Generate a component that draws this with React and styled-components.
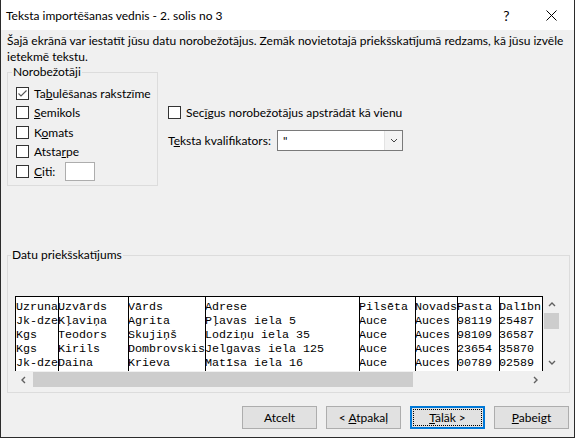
import React from "react";
import styled, { createGlobalStyle, css } from "styled-components";

const GlobalStyle = createGlobalStyle`
  html, body {
    margin: 0;
    padding: 0;
    background: #fff;
  }
  body {
    font-family: Lato, "Noto Sans", sans-serif;
    font-size: 12px;
    color: #000;
  }
`;

const Window = styled.div`
  box-sizing: border-box;
  width: 575px;
  height: 438px;
  display: flex;
  flex-direction: column;
  border: 1px solid #2b2b2b;
  border-top: none;
  background: #f0f0f0;
`;

const TitleBar = styled.div`
  height: 30px;
  flex-shrink: 0;
  display: flex;
  align-items: center;
  background: #fff;
`;

const Title = styled.div`
  flex: 1;
  padding-left: 5px;
`;

const TitleButton = styled.div`
  width: 45px;
  height: 30px;
  display: flex;
  align-items: center;
  justify-content: center;
  font-size: 14px;
`;

const Body = styled.div`
  flex: 1;
  display: flex;
  flex-direction: column;
  padding: 3px 4px 0 6px;
`;

const Description = styled.div`
  line-height: 16px;
  white-space: nowrap;
`;

const OptionsRow = styled.div`
  display: flex;
  margin-top: -1px;
`;

const Group = styled.fieldset`
  margin: 0;
  min-width: 0;
  border: 1px solid #dcdcdc;
  padding: ${p => p.$pad};
  ${p => p.$width && `width: ${p.$width}px; box-sizing: border-box;`}
`;

const Legend = styled.legend`
  padding: 0 1px;
  margin-left: -4px;
  line-height: 16px;
`;

const CheckRow = styled.div`
  display: flex;
  align-items: center;
  height: ${p => p.$h || 20}px;
  white-space: nowrap;
`;

const Box = styled.div`
  box-sizing: border-box;
  width: 13px;
  height: 13px;
  flex-shrink: 0;
  border: 1px solid #333;
  background: #fff;
  margin-right: 5px;
  display: flex;
  align-items: center;
  justify-content: center;
`;

const SmallInput = styled.div`
  box-sizing: border-box;
  width: 30px;
  height: 19px;
  margin-left: 10px;
  border: 1px solid #adadad;
  background: #fff;
`;

const RightColumn = styled.div`
  margin-left: 10px;
  padding-top: 38px;
`;

const ComboRow = styled.div`
  display: flex;
  align-items: center;
  margin-top: 8px;
`;

const ComboLabel = styled.div`
  width: 109px;
`;

const Combo = styled.div`
  box-sizing: border-box;
  width: 126px;
  height: 21px;
  display: flex;
  border: 1px solid #7a7a7a;
  background: #fff;
`;

const ComboValue = styled.div`
  flex: 1;
  padding-left: 5px;
  line-height: 19px;
`;

const ComboButton = styled.div`
  width: 17px;
  display: flex;
  align-items: center;
  justify-content: center;
  background: #f3f3f3;
  border-left: 1px solid #e3e3e3;
`;

const PreviewGroup = styled(Group)`
  margin-top: 61px;
`;

const Preview = styled.div`
  display: grid;
  grid-template-columns: 1fr 17px;
  grid-template-rows: 75px 17px;
`;

const Table = styled.div`
  display: flex;
  overflow: hidden;
  background: #fff;
  border: 1px solid #000;
  border-bottom: none;
  font-family: "Liberation Mono", "DejaVu Sans Mono", monospace;
  font-size: 11.666px;
  line-height: 14px;
`;

const Col = styled.div`
  flex-shrink: 0;
  width: ${p => p.$chars * 7}px;
  padding-top: 3px;
  white-space: pre;
  overflow: hidden;
  ${p => !p.$first && `box-shadow: inset 1px 0 0 #000;`}
`;

const VScroll = styled.div`
  display: flex;
  flex-direction: column;
  align-items: center;
  background: #f0f0f0;
`;

const HScroll = styled.div`
  display: flex;
  align-items: center;
  background: #f0f0f0;
`;

const Arrow = styled.div`
  width: 17px;
  height: 17px;
  flex-shrink: 0;
  display: flex;
  align-items: center;
  justify-content: center;
`;

const Thumb = styled.div`
  background: #cdcdcd;
  ${p =>
    p.$vertical
      ? css`
          width: 15px;
          height: 16px;
        `
      : css`
          height: 15px;
          width: 380px;
          margin-left: 1px;
        `}
`;

const Spacer = styled.div`
  flex: 1;
`;

const Corner = styled.div`
  background: #f0f0f0;
`;

const Footer = styled.div`
  display: flex;
  justify-content: flex-end;
  gap: 9px;
  margin-top: 13px;
  padding-right: 1px;
`;

const Button = styled.div`
  position: relative;
  box-sizing: border-box;
  width: 75px;
  height: 23px;
  display: flex;
  align-items: center;
  justify-content: center;
  white-space: pre;
  background: #e1e1e1;
  border: 1px solid #adadad;
  ${p =>
    p.$focused &&
    css`
      border: 2px solid #0078d7;
      &::after {
        content: "";
        position: absolute;
        inset: 1px;
        border: 1px dotted #000;
      }
    `}
`;

const Check = () => (
  <svg width="11" height="11" viewBox="0 0 11 11">
    <polyline points="1.5,5.5 4,8 9.5,2.5" fill="none" stroke="#555" strokeWidth="1.1" />
  </svg>
);

const Chevron = ({ dir, size = 7, color = "#606060", width = 1.4 }) => {
  const pts = {
    up: "1,5 4,2 7,5",
    down: "1,2 4,5 7,2",
    left: "5,1 2,4 5,7",
    right: "3,1 6,4 3,7"
  }[dir];
  return (
    <svg width={size + 1} height={size + 1} viewBox="0 0 8 8">
      <polyline points={pts} fill="none" stroke={color} strokeWidth={width} />
    </svg>
  );
};

const columns = [
  { chars: 6, rows: ["Uzruna", "Jk-dze", "Kgs", "Kgs", "Jk-dze"] },
  { chars: 10, rows: ["Uzvārds", "Kļaviņa", "Teodors", "Kirils", "Daina"] },
  { chars: 11, rows: ["Vārds", "Agrita", "Skujiņš", "Dombrovskis", "Krieva"] },
  { chars: 22, rows: ["Adrese", "Pļavas iela 5", "Lodziņu iela 35", "Jelgavas iela 125", "Matīsa iela 16"] },
  { chars: 8, rows: ["Pilsēta", "Auce", "Auce", "Auce", "Auce"] },
  { chars: 6, rows: ["Novads", "Auces", "Auces", "Auces", "Auces"] },
  { chars: 6, rows: ["Pasta", "98119", "98109", "23654", "00789"] },
  { chars: 6, rows: ["Dalībn", "25487", "36587", "35870", "02589"] }
];

function App() {
  return (
    <>
      <GlobalStyle />
      <Window>
        <TitleBar>
          <Title>Teksta importēšanas vednis - 2. solis no 3</Title>
          <TitleButton>?</TitleButton>
          <TitleButton>
            <svg width="11" height="11" viewBox="0 0 11 11">
              <path d="M0.5 0.5 L10.5 10.5 M10.5 0.5 L0.5 10.5" stroke="#000" strokeWidth="1" />
            </svg>
          </TitleButton>
        </TitleBar>

        <Body>
          <Description>
            Šajā ekrānā var iestatīt jūsu datu norobežotājus. Zemāk novietotajā priekšskatījumā redzams, kā jūsu izvēle
            <br />
            ietekmē tekstu.
          </Description>

          <OptionsRow>
            <Group $width={151} $pad="3px 0 4px 8px">
              <Legend>Norobežotāji</Legend>
              <CheckRow $h={20}>
                <Box><Check /></Box>
                <span>Ta<u>b</u>ulēšanas rakstzīme</span>
              </CheckRow>
              <CheckRow $h={19}>
                <Box />
                <span><u>S</u>emikols</span>
              </CheckRow>
              <CheckRow $h={20}>
                <Box />
                <span>K<u>o</u>mats</span>
              </CheckRow>
              <CheckRow $h={19}>
                <Box />
                <span>Atsta<u>r</u>pe</span>
              </CheckRow>
              <CheckRow $h={20}>
                <Box />
                <span><u>C</u>iti:</span>
                <SmallInput />
              </CheckRow>
            </Group>

            <RightColumn>
              <CheckRow $h={20}>
                <Box />
                <span>Sec<u>ī</u>gus norobežotājus apstrādāt kā vienu</span>
              </CheckRow>
              <ComboRow>
                <ComboLabel>T<u>e</u>ksta kvalifikators:</ComboLabel>
                <Combo>
                  <ComboValue>"</ComboValue>
                  <ComboButton>
                    <Chevron dir="down" color="#444" width={1} />
                  </ComboButton>
                </Combo>
              </ComboRow>
            </RightColumn>
          </OptionsRow>

          <PreviewGroup $pad="33px 9px 4px 7px">
            <Legend>Datu priekšskat<u>ī</u>jums</Legend>
            <Preview>
              <Table>
                {columns.map((col, i) => (
                  <Col key={i} $chars={col.chars} $first={i === 0}>
                    {col.rows.join("\n")}
                  </Col>
                ))}
              </Table>
              <VScroll>
                <Arrow><Chevron dir="up" /></Arrow>
                <Thumb $vertical />
                <Spacer />
                <Arrow><Chevron dir="down" /></Arrow>
              </VScroll>
              <HScroll>
                <Arrow><Chevron dir="left" /></Arrow>
                <Thumb />
                <Spacer />
                <Arrow><Chevron dir="right" /></Arrow>
              </HScroll>
              <Corner />
            </Preview>
          </PreviewGroup>

          <Footer>
            <Button><span>Atcelt</span></Button>
            <Button><span>&lt; <u>A</u>tpakaļ</span></Button>
            <Button $focused><span><u>T</u>ālāk &gt;</span></Button>
            <Button><span><u>P</u>abeigt</span></Button>
          </Footer>
        </Body>
      </Window>
    </>
  );
}

export default App;
